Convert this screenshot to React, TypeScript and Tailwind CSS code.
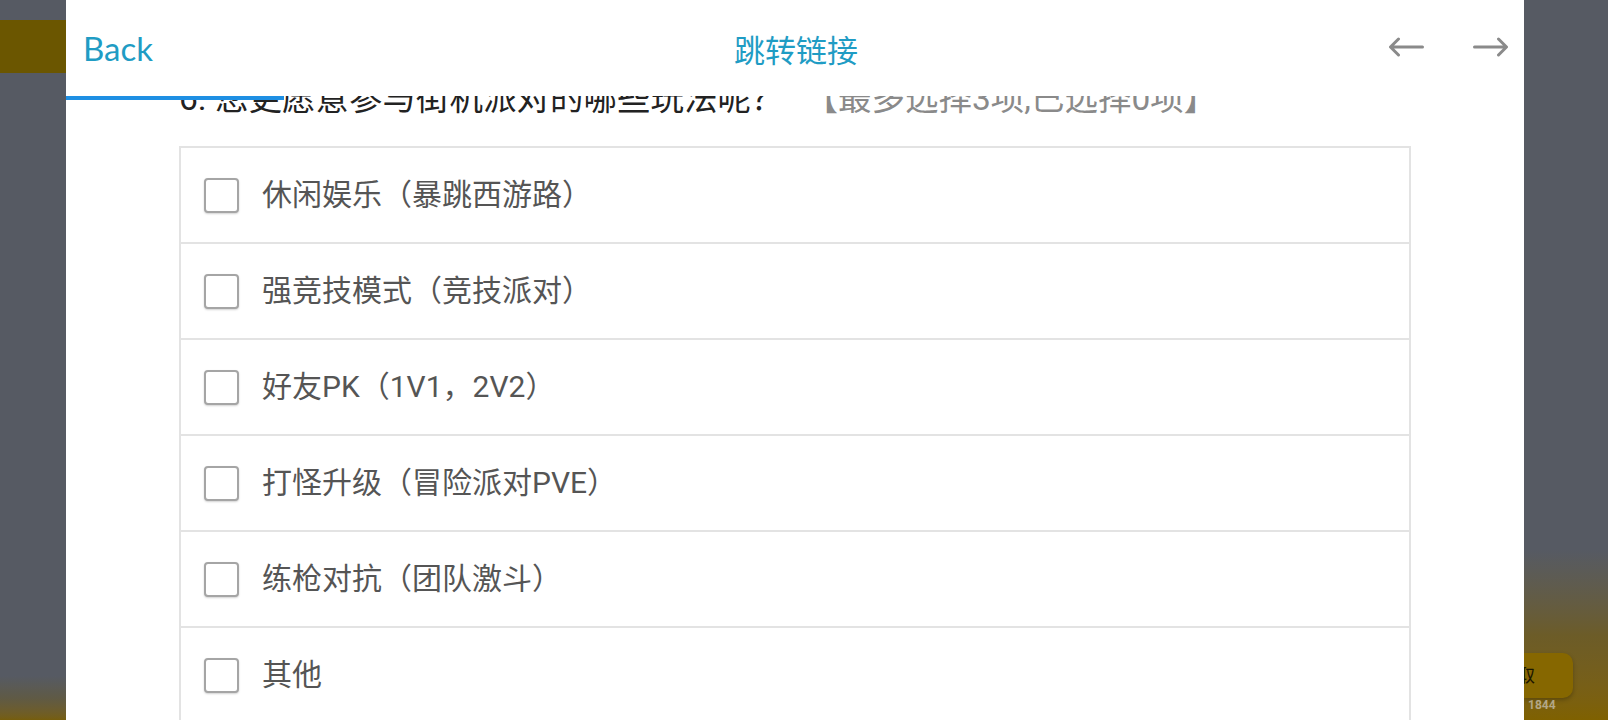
import React from "react";

const options = [
  "休闲娱乐（暴跳西游路）",
  "强竞技模式（竞技派对）",
  "好友PK（1V1，2V2）",
  "打怪升级（冒险派对PVE）",
  "练枪对抗（团队激斗）",
  "其他",
];

const ArrowLeft = () => (
  <svg width="36" height="20" viewBox="0 0 36 20" fill="none">
    <path d="M34.5 10H3M10.5 2L2.5 10L10.5 18" stroke="#8a8a8a" strokeWidth="3" strokeLinecap="round" strokeLinejoin="round" />
  </svg>
);

const ArrowRight = () => (
  <svg width="36" height="20" viewBox="0 0 36 20" fill="none">
    <path d="M1.5 10H33M25.5 2L33.5 10L25.5 18" stroke="#8a8a8a" strokeWidth="3" strokeLinecap="round" strokeLinejoin="round" />
  </svg>
);

const App = () => {
  return (
    <div className="flex h-[720px] w-full overflow-hidden bg-[#565a63] font-['Roboto','Noto_Sans_CJK_SC',sans-serif]">
      {/* left backdrop */}
      <div className="flex h-full w-[66px] shrink-0 flex-col">
        <div className="h-[20px]" />
        <div className="h-[53px] bg-[#6b5600]" />
        <div className="flex-1" />
        <div className="h-[44px] bg-gradient-to-b from-[#565a63] via-[#5f5a45] to-[#765e0c]" />
      </div>

      {/* panel */}
      <div className="relative flex h-full w-[1458px] shrink-0 flex-col bg-white">
        <div className="grid h-[96px] shrink-0 grid-cols-[1fr_auto_1fr] items-center pl-[17px] pr-[15px]">
          <div className="font-['Lato','Noto_Sans',sans-serif] text-[33px] leading-none text-[#1f9cc4]">Back</div>
          <div className="font-['Noto_Sans_CJK_SC',sans-serif] text-[31px] leading-none text-[#1f9cc4]">跳转链接</div>
          <div className="flex items-center justify-end gap-[49px] pb-[3px]">
            <ArrowLeft />
            <ArrowRight />
          </div>
        </div>
        <div className="absolute left-0 top-[96px] z-10 h-[4px] w-[218px] bg-[#1e8fe3]" />

        <div className="flex-1 overflow-hidden px-[113px]">
          <div className="-mt-[14px] flex items-center whitespace-nowrap text-[33.5px] leading-[33px]">
            <span className="text-[#222]">6. 您更愿意参与街机派对的哪些玩法呢？</span>
            <span className="ml-[20px] text-[#8a8a8a]">【最多选择3项,已选择0项】</span>
          </div>

          <div className="mt-[31px] border-x-2 border-t-2 border-[#e3e3e3]">
            {options.map((opt) => (
              <div key={opt} className="flex h-[96px] items-center border-b-2 border-[#e3e3e3] pl-[23px]">
                <div className="h-[35px] w-[35px] shrink-0 rounded-[4px] border-2 border-[#a5a5a5] bg-white shadow-[0_1px_2px_rgba(0,0,0,0.18)]" />
                <span className="ml-[23px] text-[30px] leading-none text-[#555]">{opt}</span>
              </div>
            ))}
          </div>
        </div>
      </div>

      {/* right backdrop */}
      <div className="flex h-full flex-1 flex-col overflow-hidden">
        <div className="flex-1" />
        <div className="flex h-[170px] flex-col bg-gradient-to-b from-[#565a63] via-[#6c5c28] to-[#7f6100] pt-[103px]">
          <div className="flex h-[45px] w-[49px] items-center rounded-r-[10px] bg-[#866700] shadow-[0_2px_4px_rgba(0,0,0,0.25)]">
            <span className="-ml-[7px] text-[18px] leading-none text-[#1a1600]">取</span>
          </div>
          <span className="mt-[1px] pl-[4px] text-[12px] font-bold leading-none text-[#b3a785]">1844</span>
        </div>
      </div>
    </div>
  );
};

export default App;
